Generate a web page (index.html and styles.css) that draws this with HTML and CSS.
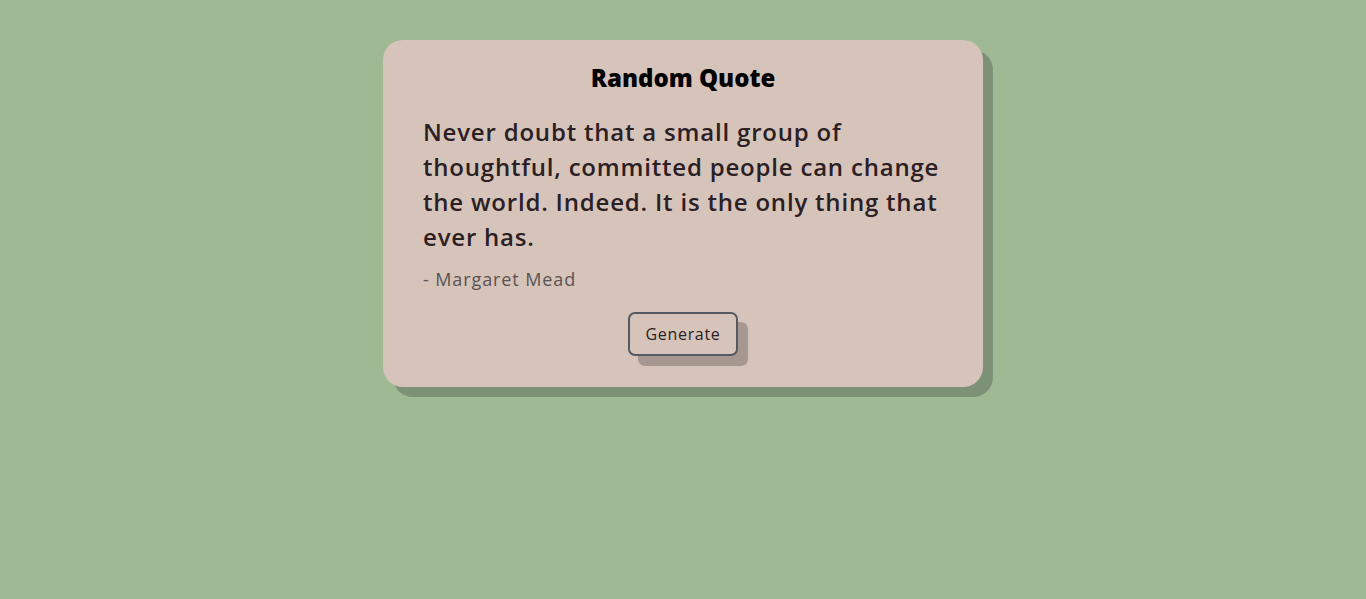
FILE: index.html
```html
<!DOCTYPE html>
<html lang="en">
<head>
<meta charset="utf-8">
<title>Random Quote</title>
<link rel="stylesheet" href="styles.css">
</head>
<body>
<main class="card">
  <h1 class="title">Random Quote</h1>
  <p class="quote">Never doubt that a small group of thoughtful, committed people can change the world. Indeed. It is the only thing that ever has.</p>
  <p class="author">- Margaret Mead</p>
  <div class="actions">
    <button class="btn" type="button">Generate</button>
  </div>
</main>
</body>
</html>
```
FILE: styles.css
```css
html, body {
  margin: 0;
  padding: 0;
}
body {
  background: #a0b995;
  font-family: "Open Sans", "DejaVu Sans", sans-serif;
  min-height: 599px;
}
.card {
  width: 600px;
  box-sizing: border-box;
  margin: 40px auto 0;
  background: #d6c4bb;
  border-radius: 20px;
  box-shadow: 10px 10px 0 #7d9177;
  padding: 22px 40px 31px;
}
.title {
  margin: 0;
  text-align: center;
  font-size: 24px;
  font-weight: 800;
  line-height: 32px;
  color: #000;
}
.quote {
  margin: 20px 0 0;
  font-size: 24px;
  font-weight: 600;
  line-height: 35px;
  letter-spacing: 0.8px;
  color: #2b2023;
}
.author {
  margin: 12px 0 0;
  font-size: 18px;
  line-height: 26px;
  letter-spacing: 0.9px;
  color: #5a5352;
}
.actions {
  display: flex;
  justify-content: center;
  margin-top: 20px;
}
.btn {
  width: 110px;
  height: 44px;
  box-sizing: border-box;
  background: #d6c4bb;
  border: 2px solid #555a62;
  border-radius: 7px;
  box-shadow: 10px 10px 0 #a69891;
  font-family: "Open Sans", sans-serif;
  font-size: 16px;
  letter-spacing: 0.7px;
  color: #2b2023;
  padding: 0;
}
```
